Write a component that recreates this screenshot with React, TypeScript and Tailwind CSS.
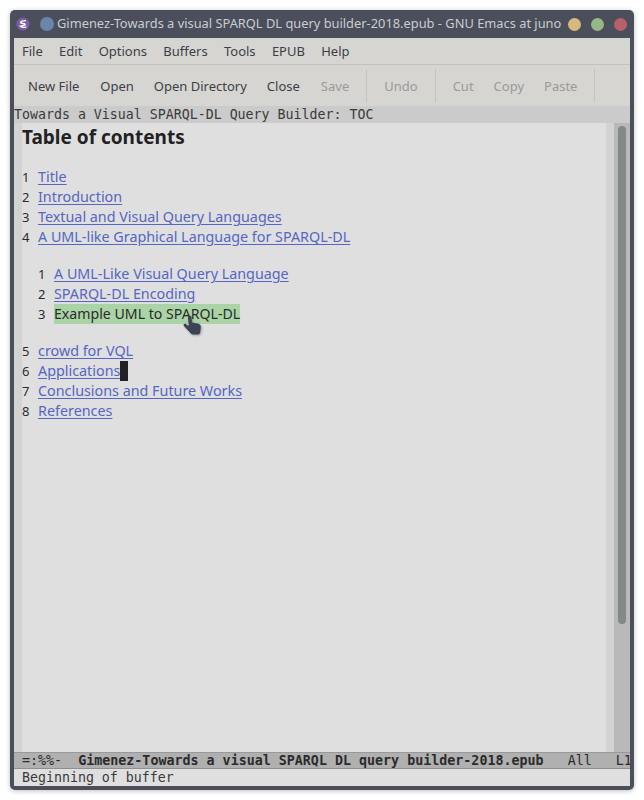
const menus = ['File', 'Edit', 'Options', 'Buffers', 'Tools', 'EPUB', 'Help']

const chapters = [
  { n: 1, title: 'Title' },
  { n: 2, title: 'Introduction' },
  { n: 3, title: 'Textual and Visual Query Languages' },
  { n: 4, title: 'A UML-like Graphical Language for SPARQL-DL' },
]

const sections = [
  { n: 1, title: 'A UML-Like Visual Query Language' },
  { n: 2, title: 'SPARQL-DL Encoding' },
]

const moreChapters = [
  { n: 7, title: 'Conclusions and Future Works' },
  { n: 8, title: 'References' },
]

function TocRow({ n, children, indent }: { n: number; children: React.ReactNode; indent?: boolean }) {
  return (
    <div className={`flex h-5 items-baseline leading-[20px] whitespace-nowrap ${indent ? 'pl-4' : ''}`}>
      <span className="w-4 text-[13px] text-[#2b2b2b]">{n}</span>
      {children}
    </div>
  )
}

function TocLink({ title }: { title: string }) {
  return <span className="text-[#5566c4] underline underline-offset-2">{title}</span>
}

function ToolButton({ label, disabled, className }: { label: string; disabled?: boolean; className: string }) {
  return <span className={`pt-[2px] ${className} ${disabled ? 'text-[#9a9a97]' : 'text-[#3c3f46]'}`}>{label}</span>
}

export default function App() {
  return (
    <div className="min-h-[800px] bg-white pt-[10px] pl-[10px] font-['Noto_Sans',sans-serif]">
      <div className="relative flex h-[780px] w-[624px] flex-col rounded-[5px] bg-[#4b4f5b] px-[4px] pb-[4px] shadow-[0_1px_5px_rgba(0,0,0,0.25)]">
        {/* title bar */}
        <div className="flex h-[28px] shrink-0 items-center text-[12.85px] text-[#c9ccd2]">
          <svg width="14" height="14" viewBox="0 0 14 14" className="ml-[2px] shrink-0">
            <circle cx="7" cy="7" r="6.5" fill="#7d5ba6" />
            <path d="M10 3.6 C7 3.6 4.4 4.4 4.6 5.6 C4.8 6.8 9.2 6.2 9.2 7.4 C9.2 8.4 6 8.8 4.4 9.2 C6 10.6 9.4 10.8 10.4 9.6" fill="none" stroke="#fff" strokeWidth="1.4" />
          </svg>
          <span className="ml-[10px] h-[14px] w-[14px] shrink-0 rounded-full bg-[#6b86ab]" />
          <span className="ml-[3px] w-[509px] overflow-hidden whitespace-nowrap">
            Gimenez-Towards a visual SPARQL DL query builder-2018.epub - GNU Emacs at juno
          </span>
          <span className="ml-[2px] h-[13px] w-[13px] shrink-0 rounded-full bg-[#d7b97e]" />
          <span className="ml-[10px] h-[13px] w-[13px] shrink-0 rounded-full bg-[#97b886]" />
          <span className="ml-[10px] h-[13px] w-[13px] shrink-0 rounded-full bg-[#b66268]" />
        </div>

        {/* menu bar */}
        <div className="flex h-[27px] shrink-0 items-center gap-[16.3px] border-b border-[#c2c1be] bg-[#d6d5d2] pt-[1px] pl-[8px] text-[13px] text-[#3c3f46]">
          {menus.map((m) => (
            <span key={m}>{m}</span>
          ))}
        </div>

        {/* toolbar */}
        <div className="flex h-[41px] shrink-0 items-center bg-[#d6d5d2] text-[13px]">
          <ToolButton label="New File" className="ml-[14px]" />
          <ToolButton label="Open" className="ml-[21px]" />
          <ToolButton label="Open Directory" className="ml-[20px]" />
          <ToolButton label="Close" className="ml-[20px]" />
          <ToolButton label="Save" disabled className="ml-[21px]" />
          <span className="ml-[17px] h-[33px] w-px bg-[#c4c3c0]" />
          <ToolButton label="Undo" disabled className="ml-[17px]" />
          <span className="ml-[17px] h-[33px] w-px bg-[#c4c3c0]" />
          <ToolButton label="Cut" disabled className="ml-[17px]" />
          <ToolButton label="Copy" disabled className="ml-[20px]" />
          <ToolButton label="Paste" disabled className="ml-[20px]" />
          <span className="ml-[17px] h-[33px] w-px bg-[#c4c3c0]" />
        </div>

        {/* header line */}
        <div className="flex h-[17px] shrink-0 items-center whitespace-pre bg-[#cbcbcb] font-['DejaVu_Sans_Mono',monospace] text-[13.28px] text-[#3a3a3a]">
          Towards a Visual SPARQL-DL Query Builder: TOC
        </div>

        {/* buffer and scroll bar */}
        <div className="flex min-h-0 flex-1">
          <div className="w-[8px] shrink-0 bg-[#d3d3d3]" />
          <div className="relative flex-1 bg-[#dfdfdf] text-[14.33px]">
            <div className="h-[29px] text-[19px] leading-[29px] font-bold text-[#222222]">Table of contents</div>
            <div className="h-[15px]" />
            {chapters.map((c) => (
              <TocRow key={c.n} n={c.n}>
                <TocLink title={c.title} />
              </TocRow>
            ))}
            <div className="h-[17px]" />
            {sections.map((s) => (
              <TocRow key={s.n} n={s.n} indent>
                <TocLink title={s.title} />
              </TocRow>
            ))}
            <TocRow n={3} indent>
              <span className="bg-[#aad4a5] text-[14.15px] text-[#2b2b2b]">Example UML to SPARQL-DL</span>
            </TocRow>
            <div className="h-[17px]" />
            <TocRow n={5}>
              <TocLink title="crowd for VQL" />
            </TocRow>
            <TocRow n={6}>
              <TocLink title="Applications" />
              <span className="inline-block w-[8px] bg-[#222222]">&nbsp;</span>
            </TocRow>
            {moreChapters.map((c) => (
              <TocRow key={c.n} n={c.n}>
                <TocLink title={c.title} />
              </TocRow>
            ))}
            {/* mouse pointer */}
            <svg width="20" height="21" viewBox="0 0 20 21" className="absolute top-[192px] left-[161px] drop-shadow-[1px_1px_1px_rgba(0,0,0,0.3)]">
              <path
                d="M5 2.2 C5 .4 8.2 .4 8.4 2.2 L9 7.4 L14.6 8.6 C17 9.2 18 10.4 17.8 12.4 L17.2 17 C17 18.8 16 19.6 14.2 19.6 L10.6 19.6 C9.2 19.6 8.2 19 7.4 18 L.9 11 C-.1 9.6 1.6 8.2 3 9.2 L5.8 11 Z"
                fill="#3c4257"
              />
            </svg>
          </div>
          <div className="w-[8px] shrink-0 bg-[#d3d3d3]" />
          <div className="w-[16px] shrink-0 bg-[#b9b9b9] px-[4px] pt-[3px]">
            <div className="h-[498px] rounded-[4px] bg-[#838888]" />
          </div>
        </div>

        {/* mode line */}
        <div className="flex h-[17px] shrink-0 items-center overflow-hidden border-t border-b border-t-[#999999] border-b-[#8f8f8f] bg-[#b0b0b0] whitespace-pre pl-[8px] font-['DejaVu_Sans_Mono',monospace] text-[13.33px] text-[#2b2b2b]">
          =:%%-  <span className="font-bold">Gimenez-Towards a visual SPARQL DL query builder-2018.epub</span>   All   L1
        </div>

        {/* echo area */}
        <div className="flex h-[17px] shrink-0 items-center whitespace-pre bg-[#dfdfdf] pl-[8px] font-['DejaVu_Sans_Mono',monospace] text-[13.28px] text-[#3a3a3a]">
          Beginning of buffer
        </div>
      </div>
    </div>
  )
}
